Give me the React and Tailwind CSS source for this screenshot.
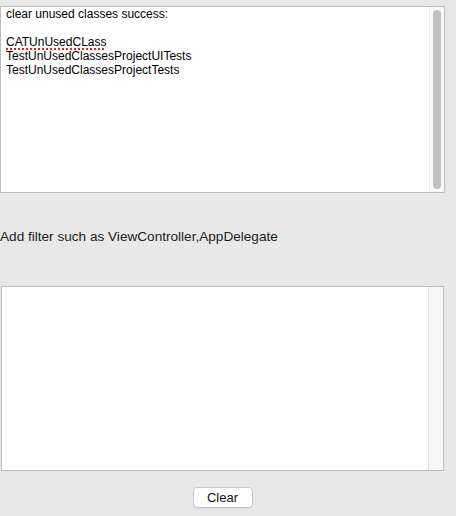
export default function App() {
  const results = ['CATUnUsedCLass', 'TestUnUsedClassesProjectUITests', 'TestUnUsedClassesProjectTests'];

  return (
    <div className="w-[456px] h-[516px] bg-[#e8e8e8] font-['Liberation_Sans',Arial,sans-serif] text-black overflow-hidden">
      {/* output log */}
      <div className="ml-0 mt-[6px] w-[445px] h-[187px] flex bg-white border border-[#bdbdbd]">
        <div className="flex-1 pl-[5px] pt-[0px] text-[12px] leading-[14px]">
          <div>clear unused classes success:</div>
          <div className="h-[14px]"></div>
          {results.map((name, i) => (
            <div key={name}>
              <span className={i === 0 ? 'underline decoration-dotted decoration-[#e0241c] decoration-2 underline-offset-[2px]' : ''}>
                {name}
              </span>
            </div>
          ))}
        </div>
        <div className="w-[15px] bg-[#fafafa] border-l border-[#ececec] flex justify-center py-[3px]">
          <div className="w-[8px] h-full rounded-full bg-[#c1c1c1]"></div>
        </div>
      </div>

      <div className="mt-[36px] text-[13.6px] leading-[16px] text-[#222]">
        Add filter such as ViewController,AppDelegate
      </div>

      {/* filter input */}
      <div className="ml-[1px] mt-[41px] w-[443px] h-[185px] flex bg-white border border-[#bdbdbd]">
        <div className="flex-1"></div>
        <div className="w-[15px] bg-[#f7f7f7] border-l border-[#e0e0e0]"></div>
      </div>

      <div className="flex justify-center mt-[16px] pr-[11px]">
        <button className="w-[60px] h-[21px] bg-white border border-[#c8c8c8] rounded-[4px] text-[13px] leading-[18px] text-[#111] shadow-[0_1px_0_rgba(0,0,0,0.05)]">
          Clear
        </button>
      </div>
    </div>
  );
}
